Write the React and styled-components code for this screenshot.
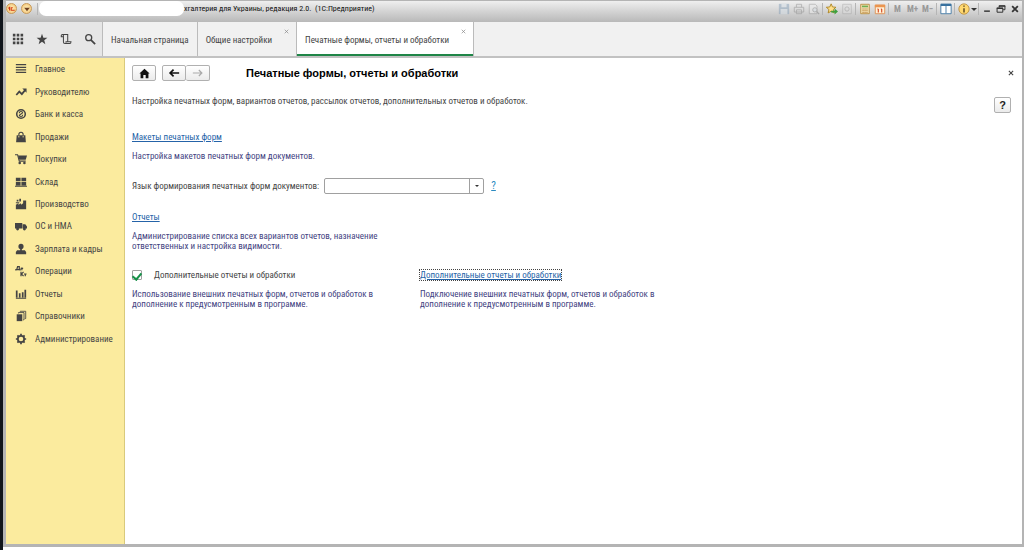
import { useState } from "react";
import styled, { createGlobalStyle } from "styled-components";

const GlobalStyle = createGlobalStyle`
  * {
    box-sizing: border-box;
  }

  body {
    margin: 0;
    background: #fff;
    font-family: "Roboto Condensed", Roboto, sans-serif;
    font-size: 9px;
    line-height: 10px;
    color: #444;
  }

  button, input {
    font: inherit;
    color: inherit;
    padding: 0;
    margin: 0;
  }
`;

const sections = [
  { name: "Главное", icon: <path d="M1 2h12M1 5h12M1 8h12M1 11h12" stroke="currentColor" strokeWidth="1.5" /> },
  {
    name: "Руководителю",
    icon: (
      <>
        <path d="M1.500 10.500l3.500-4 3 3 4-5" fill="none" stroke="currentColor" strokeWidth="2" />
        <path d="M8.500 3H13.500V8z" />
      </>
    ),
  },
  {
    name: "Банк и касса",
    icon: (
      <>
        <circle cx="7" cy="7" r="5" fill="none" stroke="currentColor" strokeWidth="1.800" />
        <path d="M5 6q0-2 2-2t2 1.500L5 8.500q0 1.500 2 1.500t2-2" fill="none" stroke="currentColor" strokeWidth="1.200" />
      </>
    ),
  },
  {
    name: "Продажи",
    icon: (
      <>
        <path d="M2 5h10l.7 8H1.300z" />
        <path d="M4.500 7V4q0-2.500 2.500-2.500T9.500 4v3" fill="none" stroke="currentColor" strokeWidth="1.300" />
        <path d="M4.500 5.500v2M9.500 5.500v2" stroke="#fbeb9e" />
      </>
    ),
  },
  {
    name: "Покупки",
    icon: (
      <>
        <path d="M0 2h3l2 7.500h7.500" fill="none" stroke="currentColor" strokeWidth="1.300" />
        <path d="M3.500 3H14l-1.500 5H5z" />
        <circle cx="5.500" cy="11.700" r="1.500" />
        <circle cx="11" cy="11.700" r="1.500" />
      </>
    ),
  },
  { name: "Склад", icon: <path d="M1 2h5.500v4H1zM7.500 2H13v4H7.500zM1 7h5.500v4H1zM7.500 7H13v4H7.500zM0 11.500h14v1H0z" /> },
  { name: "Производство", icon: <path d="M1 13V8l3-2v2l3-2v2l2.500-2V3h3.500v10zM2 2h2v2H2zM5 1h2v3H5zM1 5h4v1H1z" /> },
  {
    name: "ОС и НМА",
    icon: (
      <>
        <path d="M0 3.500h8.500V10H0zM9 5h3l2 2.500V10H9z" />
        <circle cx="3" cy="10.500" r="1.700" />
        <circle cx="11" cy="10.500" r="1.700" />
      </>
    ),
  },
  {
    name: "Зарплата и кадры",
    icon: (
      <>
        <circle cx="7" cy="4" r="3" />
        <path d="M6 6h2v2.500h3.500L13 10.500V13H1v-2.500L2.500 8.500H6z" />
      </>
    ),
  },
  {
    name: "Операции",
    icon: (
      <path
        d="M1 6.500v-1h5v1M2 5.500L3 2h2v3.500M8 3v3M6.500 4H9.500M7 8v5M10 8L7.500 10.500 10 13M12 10v3M10.500 10.500h3"
        fill="none"
        stroke="currentColor"
        strokeWidth="1.400"
      />
    ),
  },
  { name: "Отчеты", icon: <path d="M1 3h2v8H1zM4.500 6h2v5h-2zM8 5h2v6H8zM11 2h2v9h-2zM1 11.500h12v1H1z" /> },
  {
    name: "Справочники",
    icon: (
      <>
        <path d="M2 5h6.500v8H2z" />
        <path d="M4 4V3h6.500v8.500H9.500M6 2V1.500h6.500V10h-1" fill="none" stroke="currentColor" strokeWidth="1" />
      </>
    ),
  },
  {
    name: "Администрирование",
    icon: (
      <>
        <circle cx="7" cy="7" r="3.700" fill="none" stroke="currentColor" strokeWidth="2" />
        <path
          d="M7 1v2M7 11v2M1 7h2M11 7h2M2.800 2.800l1.400 1.400M9.800 9.800l1.400 1.400M2.800 11.200l1.400-1.400M9.800 4.200l1.400-1.400"
          stroke="currentColor"
          strokeWidth="2"
        />
      </>
    ),
  },
];

const quickTools = [
  {
    name: "Меню функций",
    icon: <path d="M1 1h3v3H1zM5.500 1h3v3h-3zM10 1h3v3h-3zM1 5.500h3v3H1zM5.500 5.500h3v3h-3zM10 5.500h3v3h-3zM1 10h3v3H1zM5.500 10h3v3h-3zM10 10h3v3h-3z" />,
  },
  { name: "Избранное", icon: <path d="M7 1l1.600 4.400 4.700.1-3.700 2.900 1.300 4.600L7 10.300 3.100 13l1.300-4.600L.7 5.500l4.700-.1z" /> },
  {
    name: "История",
    icon: (
      <path
        d="M4 4.500H1.500V3q0-1.300 1.300-1.300H9V10M4 3v7.500q0 1.800 1.800 1.800h5.700q1.300 0 1.300-2H7v1M4 3q0-1.300-1.200-1.300"
        fill="none"
        stroke="currentColor"
        strokeWidth="1.200"
      />
    ),
  },
  {
    name: "Поиск",
    icon: (
      <>
        <circle cx="5.500" cy="5.500" r="3.500" fill="none" stroke="currentColor" strokeWidth="1.500" />
        <path d="M8 8l5 5" stroke="currentColor" strokeWidth="2" />
      </>
    ),
  },
];

const pages = [
  { name: "Начальная страница", closable: false },
  { name: "Общие настройки", closable: true },
  { name: "Печатные формы, отчеты и обработки", closable: true },
];

const Icon = ({ size = 12, children }) => (
  <svg width={size} height={size} viewBox="0 0 14 14" fill="currentColor" aria-hidden="true">
    {children}
  </svg>
);

const WindowTitle = () => (
  <TitleBar>
    <RoundButton type="button" aria-label="1С">
      <Icon size={10}>
        <path d="M2 6l2-1.500v5M9 5H6.500v4H12" fill="none" stroke="#d43a12" strokeWidth="1.700" />
      </Icon>
    </RoundButton>
    <RoundButton type="button" aria-label="Главное меню">
      <Icon size={8}>
        <path d="M2 5h10L7 11z" fill="#704020" />
      </Icon>
    </RoundButton>
    <Divider />
    <HiddenName />
    <Caption>хгалтерия для Украины, редакция 2.0.&nbsp; (1С:Предприятие)</Caption>
    <TitleTool type="button" aria-label="Сохранить" $faded>
      <Icon>
        <path d="M1 1h12v12H1z" fill="#7e9ab5" />
        <path d="M4 1h6v4H4zM3 7h8v6H3z" fill="#d5dfe8" />
      </Icon>
    </TitleTool>
    <TitleTool type="button" aria-label="Печать" $faded>
      <Icon>
        <path d="M4 5V1.500h6V5M1.500 5h11v5.500h-11zM4 8h6v4.500H4z" fill="#ddd" stroke="#777" />
      </Icon>
    </TitleTool>
    <TitleTool type="button" aria-label="Просмотр" $faded>
      <Icon>
        <path d="M1.500 1.500h7l2 2v9h-9z" fill="#eee" stroke="#888" />
        <circle cx="8" cy="8" r="2.500" fill="#dde6ee" stroke="#777" />
        <path d="M10 10l3 3" stroke="#777" strokeWidth="1.500" />
      </Icon>
    </TitleTool>
    <Divider />
    <TitleTool type="button" aria-label="Добавить в избранное">
      <Icon>
        <path d="M6 1l1.600 3.600 4 .4-3 2.600.9 4L6 9.600 2.500 11.600l.9-4-3-2.600 4-.4z" fill="#ffe08a" stroke="#a8801c" />
        <path d="M6 9h4V6.500L14 10l-4 3.500V11H6z" fill="#3ea03e" />
      </Icon>
    </TitleTool>
    <TitleTool type="button" aria-label="Ссылка" $faded>
      <Icon>
        <path d="M2 1.500h10v11H2z" fill="#ddd" stroke="#999" />
        <circle cx="7" cy="7" r="2.500" fill="none" stroke="#888" />
      </Icon>
    </TitleTool>
    <Divider />
    <TitleTool type="button" aria-label="Калькулятор">
      <Icon>
        <path d="M2 1.500h10v11H2z" fill="#f3e2b4" stroke="#b78a3c" />
        <path d="M3.500 3h7v2h-7z" fill="#6fae52" />
        <path d="M4 7h6M4 9h6M4 11h6" stroke="#b5762e" strokeDasharray="1.500 .8" />
      </Icon>
    </TitleTool>
    <TitleTool type="button" aria-label="Календарь">
      <Icon>
        <path d="M1.500 2.500h11v10h-11z" fill="#fff2d8" stroke="#dc8b4c" />
        <path d="M1 2h12v3H1z" fill="#eb9550" />
        <path d="M5 7v4M9 7v4M4 7h1M8 7h1" stroke="#d6421c" strokeWidth="1.300" />
      </Icon>
    </TitleTool>
    <Divider />
    <MemoryButton type="button">M</MemoryButton>
    <MemoryButton type="button">M+</MemoryButton>
    <MemoryButton type="button">M−</MemoryButton>
    <Divider />
    <TitleTool type="button" aria-label="Панели">
      <Icon>
        <path d="M1 1.500h12v11H1z" fill="#fff" stroke="#38719f" />
        <path d="M1 1h12v2.500H1zM6.500 2h1v10h-1z" fill="#38719f" />
      </Icon>
    </TitleTool>
    <Divider />
    <TitleTool type="button" aria-label="О программе">
      <Icon>
        <circle cx="7" cy="7" r="6" fill="#ffd870" stroke="#b98b3c" />
        <path d="M7 3v1.500M7 6v5" stroke="#665026" strokeWidth="1.800" />
      </Icon>
    </TitleTool>
    <SmallArrow>
      <path d="M0 2h6L3 5z" />
    </SmallArrow>
    <Divider />
    <WindowButton type="button" aria-label="Свернуть">
      <Icon size={10}>
        <path d="M3 10h8" stroke="currentColor" strokeWidth="2" />
      </Icon>
    </WindowButton>
    <WindowButton type="button" aria-label="Восстановить">
      <Icon size={10}>
        <path d="M4.500 5V2.500h8V8H10M1.500 6h8v5.500h-8z" fill="none" stroke="currentColor" strokeWidth="1.400" />
        <path d="M4 2h9v2H4zM1 5h9v2H1z" />
      </Icon>
    </WindowButton>
    <WindowButton type="button" aria-label="Закрыть">
      <Icon size={10}>
        <path d="M3 3l8 8M11 3l-8 8" stroke="currentColor" strokeWidth="2.500" />
      </Icon>
    </WindowButton>
  </TitleBar>
);

const Tabs = ({ current, setCurrent }) => (
  <TabBar>
    <QuickTools>
      {quickTools.map((tool) => (
        <QuickTool type="button" key={tool.name} aria-label={tool.name}>
          <Icon>{tool.icon}</Icon>
        </QuickTool>
      ))}
    </QuickTools>
    {pages.map((page, index) => (
      <Tab key={page.name} $active={index === current}>
        <TabLabel type="button" onClick={() => setCurrent(index)}>
          {page.name}
        </TabLabel>
        {page.closable && (
          <TabClose type="button" aria-label="Закрыть вкладку">
            <Icon size={5}>
              <path d="M2 2l10 10M12 2L2 12" stroke="currentColor" strokeWidth="2" />
            </Icon>
          </TabClose>
        )}
      </Tab>
    ))}
  </TabBar>
);

export default function App() {
  const [current, setCurrent] = useState(2);
  const [extraReports, setExtraReports] = useState(true);
  const [language, setLanguage] = useState("");

  return (
    <Frame>
      <GlobalStyle />
      <Window>
        <WindowTitle />
        <Tabs current={current} setCurrent={setCurrent} />
        <Workspace>
          <Sidebar>
            <SectionList>
              {sections.map((section) => (
                <Section href="#" key={section.name}>
                  <Icon>{section.icon}</Icon>
                  {section.name}
                </Section>
              ))}
            </SectionList>
          </Sidebar>
          <Page>
            <PageHeader>
              <NavButton type="button" aria-label="Домой">
                <Icon size={11}>
                  <path d="M7 1l6.500 6H12v6H8.500V9h-3v4H2V7H.5z" />
                </Icon>
              </NavButton>
              <NavGroup>
                <NavButton type="button" aria-label="Назад">
                  <Icon>
                    <path d="M13 7H3M6.500 3L2.500 7l4 4" fill="none" stroke="currentColor" strokeWidth="2" />
                  </Icon>
                </NavButton>
                <NavButton type="button" aria-label="Вперед" disabled>
                  <Icon>
                    <path d="M1 7h11M8 3.500L11.500 7 8 10.500" fill="none" stroke="currentColor" strokeWidth="1.400" />
                  </Icon>
                </NavButton>
              </NavGroup>
              <Title>Печатные формы, отчеты и обработки</Title>
              <PageClose type="button" aria-label="Закрыть">
                <Icon size={6}>
                  <path d="M2 2l10 10M12 2L2 12" stroke="currentColor" strokeWidth="2.500" />
                </Icon>
              </PageClose>
            </PageHeader>
            <Intro>
              <span>Настройка печатных форм, вариантов отчетов, рассылок отчетов, дополнительных отчетов и обработок.</span>
              <HelpButton type="button">?</HelpButton>
            </Intro>
            <Setting>
              <TextLink href="#">Макеты печатных форм</TextLink>
              <Hint>Настройка макетов печатных форм документов.</Hint>
            </Setting>
            <LanguageRow>
              <label htmlFor="language">Язык формирования печатных форм документов:</label>
              <Combo>
                <ComboInput id="language" value={language} onChange={(e) => setLanguage(e.target.value)} />
                <ComboButton type="button" aria-label="Выбрать">
                  <SmallArrow>
                    <path d="M1 2h4L3 4z" />
                  </SmallArrow>
                </ComboButton>
              </Combo>
              <HelpLink href="#">?</HelpLink>
            </LanguageRow>
            <Setting>
              <TextLink href="#">Отчеты</TextLink>
              <Hint>Администрирование списка всех вариантов отчетов, назначение ответственных и настройка видимости.</Hint>
            </Setting>
            <Columns>
              <Setting>
                <CheckLabel>
                  <Checkbox type="checkbox" checked={extraReports} onChange={(e) => setExtraReports(e.target.checked)} />
                  Дополнительные отчеты и обработки
                </CheckLabel>
                <Hint>Использование внешних печатных форм, отчетов и обработок в дополнение к предусмотренным в программе.</Hint>
              </Setting>
              <Setting>
                <TextLink href="#" $focused>
                  Дополнительные отчеты и обработки
                </TextLink>
                <Hint>Подключение внешних печатных форм, отчетов и обработок в дополнение к предусмотренным в программе.</Hint>
              </Setting>
            </Columns>
          </Page>
        </Workspace>
      </Window>
    </Frame>
  );
}

const Frame = styled.div`
  display: flex;
  min-height: 100vh;
  padding-bottom: 3px;
  border-left: 3px solid #10151b;
`;

const Window = styled.div`
  flex: 1;
  min-width: 0;
  display: flex;
  flex-direction: column;
  border: solid #b4b4b4;
  border-width: 1px 2px 3px 3px;
`;

const TitleBar = styled.header`
  display: flex;
  align-items: center;
  height: 21px;
  padding-bottom: 6px;
  color: #333;
  background: linear-gradient(#efefef, #d6d6d6 45%, #b9b9b9);
`;

const RoundButton = styled.button`
  display: flex;
  align-items: center;
  justify-content: center;
  width: 11px;
  height: 11px;
  margin-right: 4px;
  border: 1px solid #c79a58;
  border-radius: 50%;
  background: radial-gradient(#fff3c0, #f2bd6c);
`;

const Divider = styled.span`
  width: 1px;
  height: 12px;
  margin: 0 1px;
  background: #b5b5b5;
`;

const HiddenName = styled.span`
  width: 145px;
  height: 15px;
  border-radius: 7px;
  background: #fff;
`;

const Caption = styled.span`
  flex: 1;
  color: #111;
  font-size: 8px;
  white-space: nowrap;
`;

const TitleTool = styled.button`
  display: flex;
  align-items: center;
  justify-content: center;
  width: 15px;
  height: 14px;
  border: none;
  background: none;
  opacity: ${({ $faded }) => ($faded ? 0.45 : 1)};
`;

const MemoryButton = styled(TitleTool)`
  color: #999;
  font-weight: bold;
`;

const WindowButton = styled(TitleTool)`
  width: 14px;
`;

const SmallArrow = styled.svg.attrs({ viewBox: "0 0 6 6", "aria-hidden": true })`
  width: 6px;
  height: 6px;
  fill: #333;
`;

const TabBar = styled.nav`
  display: flex;
  height: 36px;
  background: #f1f1f1;
  border-bottom: 2px solid #c2c2c2;
`;

const QuickTools = styled.div`
  display: flex;
  align-items: center;
  background: #e6e6e6;
  border-right: 1px solid #bbb;
`;

const QuickTool = styled.button`
  display: flex;
  align-items: center;
  justify-content: center;
  width: 24px;
  height: 24px;
  border: none;
  background: none;
`;

const Tab = styled.div`
  position: relative;
  display: flex;
  border-right: 1px solid #bbb;
  background: ${({ $active }) => ($active ? "#fff" : "none")};
  box-shadow: ${({ $active }) => ($active ? "inset 0 -2px #1f8547" : "none")};
`;

const TabLabel = styled.button`
  padding: 2px 8px 0;
  border: none;
  background: none;
  white-space: nowrap;

  &:not(:last-child) {
    padding-right: 24px;
  }
`;

const TabClose = styled.button`
  position: absolute;
  top: 7px;
  right: 7px;
  display: flex;
  border: none;
  background: none;
  color: #888;
`;

const Workspace = styled.div`
  flex: 1;
  display: flex;
`;

const Sidebar = styled.aside`
  width: 119px;
  background: #fbeb9e;
  border-right: 1px solid #d9ca7c;
`;

const SectionList = styled.nav`
  display: grid;
  grid-auto-rows: 1fr;
  height: 292px;
`;

const Section = styled.a`
  display: flex;
  align-items: center;
  gap: 8px;
  padding-left: 9px;
  color: #444;
  text-decoration: none;
  white-space: nowrap;
`;

const Page = styled.main`
  flex: 1;
  min-width: 0;
  padding: 7px;
  background: #fff;
`;

const PageHeader = styled.div`
  display: flex;
  align-items: center;
`;

const NavButton = styled.button`
  display: flex;
  align-items: center;
  justify-content: center;
  width: 24px;
  height: 16px;
  border: 1px solid #b0b0b0;
  border-radius: 2px;
  background: linear-gradient(#fff, #ebebeb);
  color: #111;

  &:disabled {
    color: #aaa;
  }
`;

const NavGroup = styled.div`
  display: flex;
  margin-left: 6px;

  button + button {
    border-left: none;
  }
`;

const Title = styled.h1`
  flex: 1;
  margin: 0 0 0 36px;
  color: #000;
  font-family: "Liberation Sans", sans-serif;
  font-size: 11px;
  line-height: 16px;
`;

const PageClose = styled.button`
  display: flex;
  margin-right: 1px;
  border: none;
  background: none;
`;

const Intro = styled.div`
  display: flex;
  justify-content: space-between;
  margin: 15px 4px 19px 0;

  button {
    margin-top: 1px;
  }
`;

const HelpButton = styled.button`
  width: 17px;
  height: 16px;
  border: 1px solid #b0b0b0;
  border-radius: 2px;
  background: linear-gradient(#fff, #ebebeb);
  color: #222;
  font-family: "Liberation Sans", sans-serif;
  font-size: 11px;
  font-weight: bold;
`;

const Setting = styled.section`
  display: flex;
  flex-direction: column;
  align-items: flex-start;
  gap: 9px;
`;

const TextLink = styled.a`
  color: #2563a8;
  text-decoration: underline;
  outline: ${({ $focused }) => ($focused ? "1px dotted #444" : "none")};
`;

const Hint = styled.p`
  width: 252px;
  margin: 0;
  color: #43437f;
`;

const LanguageRow = styled.div`
  display: flex;
  align-items: center;
  margin: 17px 0 18px;
`;

const Combo = styled.div`
  display: flex;
  width: 160px;
  height: 16px;
  margin: 0 7px 0 5px;
  border: 1px solid #a0a0a0;
  border-radius: 2px;
`;

const ComboInput = styled.input`
  flex: 1;
  min-width: 0;
  border: none;
  outline: none;
  background: none;
`;

const ComboButton = styled.button`
  display: flex;
  align-items: center;
  justify-content: center;
  width: 14px;
  border: none;
  border-left: 1px solid #a0a0a0;
  background: none;
`;

const HelpLink = styled.a`
  color: #2a8ac0;
  font-size: 11px;
`;

const Columns = styled.div`
  display: grid;
  grid-template-columns: 252px 252px;
  gap: 36px;
  margin-top: 19px;
`;

const CheckLabel = styled.label`
  display: flex;
  align-items: center;
  gap: 12px;
  height: 10px;
`;

const Checkbox = styled.input`
  display: grid;
  justify-content: center;
  appearance: none;
  width: 10px;
  height: 10px;
  border: 1px solid #a0a0a0;
  border-radius: 1px;
  background: #fff;

  &:checked::after {
    content: "";
    width: 4px;
    height: 7px;
    border: solid #169048;
    border-width: 0 2px 2px 0;
    transform: rotate(40deg);
  }
`;
